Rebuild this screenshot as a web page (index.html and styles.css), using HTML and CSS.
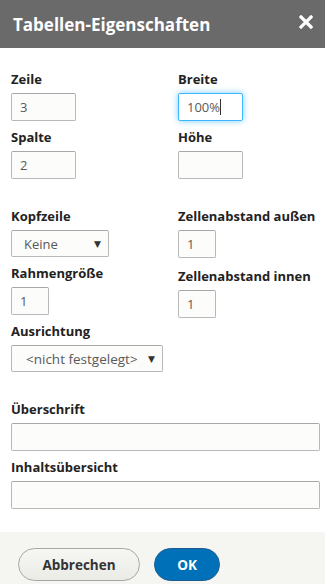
FILE: index.html
```html
<!DOCTYPE html>
<html lang="de">
<head>
    <meta charset="UTF-8">
    <meta name="viewport" content="width=device-width, initial-scale=1.0">
    <title>Tabellen-Eigenschaften</title>
    <link rel="stylesheet" href="styles.css">
</head>
<body>
    <div class="dialog">
        <div class="dialog-title">
            <span>Tabellen-Eigenschaften</span>
            <span class="close">
                <svg width="14" height="14" viewBox="0 0 14 14">
                    <path d="M2 2 L12 12 M12 2 L2 12" stroke="#fff" stroke-width="3.2" stroke-linecap="square"/>
                </svg>
            </span>
        </div>

        <div class="dialog-body">
            <div class="row">
                <div class="col-left">
                    <div class="field">
                        <label>Zeile</label>
                        <div class="input w-mid">3</div>
                    </div>
                    <div class="field">
                        <label>Spalte</label>
                        <div class="input w-mid">2</div>
                    </div>
                </div>
                <div class="col-right">
                    <div class="field">
                        <label>Breite</label>
                        <div class="input w-mid focus">100%<span class="caret"></span></div>
                    </div>
                    <div class="field">
                        <label>Höhe</label>
                        <div class="input w-mid"></div>
                    </div>
                </div>
            </div>

            <div class="row group">
                <div class="col-left">
                    <div class="field">
                        <label>Kopfzeile</label>
                        <div class="select w-head">Keine<span class="arrow">▼</span></div>
                    </div>
                    <div class="field">
                        <label>Rahmengröße</label>
                        <div class="input w-small">1</div>
                    </div>
                    <div class="field">
                        <label>Ausrichtung</label>
                        <div class="select w-align">&lt;nicht festgelegt&gt;<span class="arrow">▼</span></div>
                    </div>
                </div>
                <div class="col-right">
                    <div class="field">
                        <label>Zellenabstand außen</label>
                        <div class="input w-small">1</div>
                    </div>
                    <div class="field shift">
                        <label>Zellenabstand innen</label>
                        <div class="input w-small">1</div>
                    </div>
                </div>
            </div>

            <div class="group">
                <div class="field">
                    <label>Überschrift</label>
                    <div class="input w-full"></div>
                </div>
                <div class="field">
                    <label>Inhaltsübersicht</label>
                    <div class="input w-full"></div>
                </div>
            </div>
        </div>

        <div class="dialog-buttons">
            <div class="button">Abbrechen</div>
            <div class="button primary">OK</div>
        </div>
    </div>
</body>
</html>
```

FILE: styles.css
```css
body {
    margin: 0;
    padding: 0;
    font-family: "Open Sans", "DejaVu Sans", sans-serif;
    background-color: #fff;
}

.dialog {
    width: 325px;
    height: 584px;
    display: flex;
    flex-direction: column;
}

.dialog-title {
    height: 48px;
    background-color: #6a6a6a;
    color: #fff;
    font-size: 17px;
    font-weight: bold;
    display: flex;
    align-items: center;
    justify-content: space-between;
    padding: 0 12px 0 13px;
    box-sizing: border-box;
}

.close {
    display: flex;
    margin-top: -4px;
}

.dialog-body {
    flex: 1;
    padding: 22px 11px 0 11px;
}

.row {
    display: flex;
}

.col-left {
    width: 167px;
    flex-shrink: 0;
}

.group {
    margin-top: 21px;
}

.field {
    margin-bottom: 7px;
}

.field.shift {
    margin-top: 9px;
}

label {
    display: block;
    font-size: 13px;
    font-weight: bold;
    line-height: 18px;
    margin-bottom: 5px;
    color: #222;
    white-space: nowrap;
}

.input, .select {
    box-sizing: border-box;
    height: 28px;
    border: 1px solid #b8b8b8;
    border-top-color: #a8a8a8;
    border-radius: 2px;
    background-color: #fcfcfa;
    font-size: 13px;
    color: #595959;
    line-height: 26px;
    padding: 0 8px;
    display: flex;
    align-items: center;
}

.select {
    height: 27px;
    justify-content: space-between;
    padding: 0 7px 0 12px;
}

.arrow {
    font-size: 9px;
    color: #333;
}

.w-mid { width: 65px; }
.w-small { width: 38px; }
.w-head { width: 98px; }
.w-align { width: 152px; padding-left: 14px; font-size: 13.5px; }
.w-full { width: 309px; }

.focus {
    border-color: #40b6ff;
    box-shadow: 0 0 6px rgba(64, 182, 255, 0.7);
    background-color: #fff;
}

.caret {
    display: inline-block;
    width: 1px;
    height: 16px;
    background-color: #333;
}

.dialog-buttons {
    height: 52px;
    background-color: #f5f5f2;
    display: flex;
    align-items: flex-start;
    gap: 14px;
    padding: 16px 18px 0 18px;
    box-sizing: border-box;
}

.button {
    box-sizing: border-box;
    height: 33px;
    border-radius: 17px;
    border: 1px solid #a6a6a6;
    background: linear-gradient(#f6f6f3, #ebebe6);
    color: #333;
    font-size: 13.5px;
    font-weight: bold;
    display: flex;
    align-items: center;
    justify-content: center;
    width: 122px;
}

.button.primary {
    width: 66px;
    border-color: #1e5c90;
    background: #0071b8;
    color: #fff;
}
```
